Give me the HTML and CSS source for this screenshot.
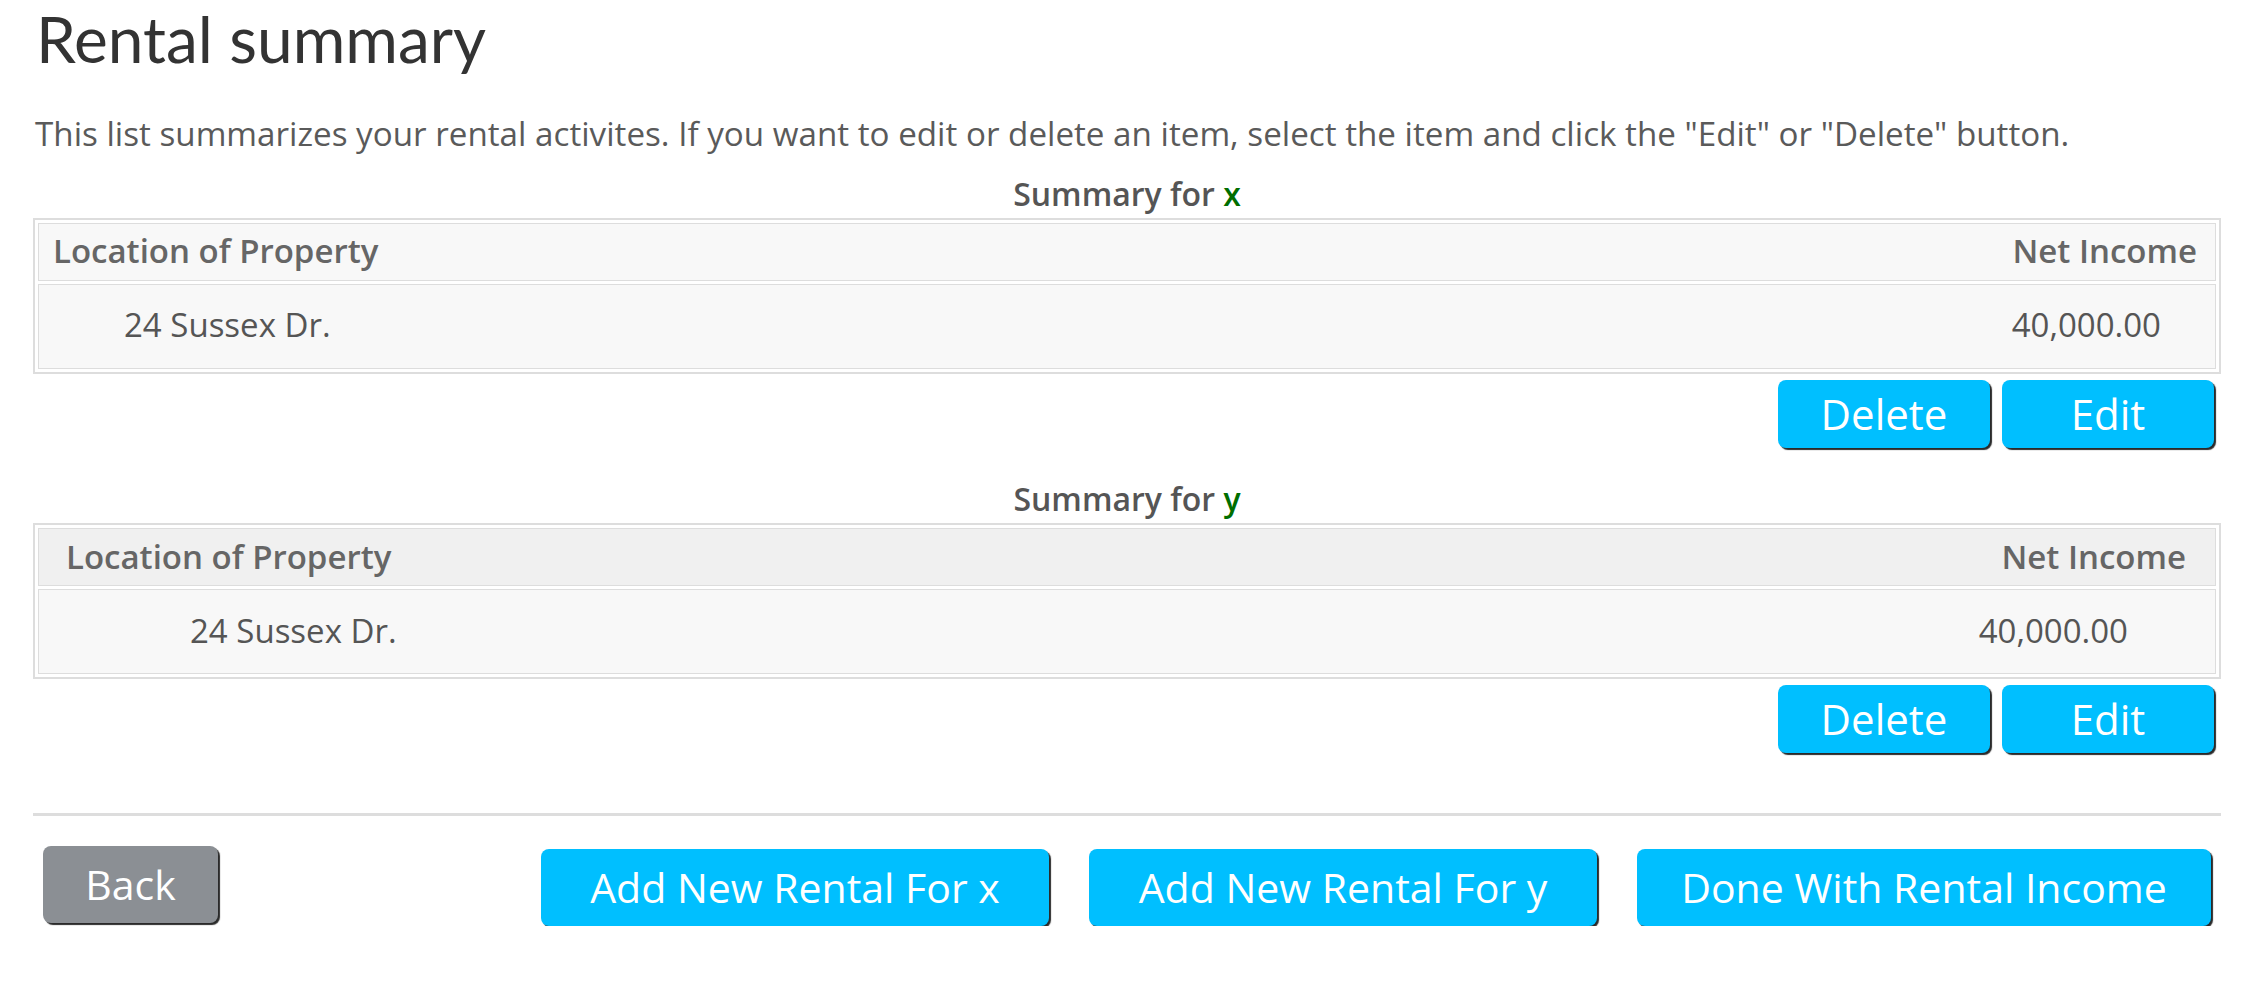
FILE: index.html
```html
<!DOCTYPE html>
<html lang="en">
<head>
<meta charset="utf-8">
<title>Rental summary</title>
<link rel="stylesheet" href="styles.css">
</head>
<body>
<div class="page">
  <h1 class="title">Rental summary</h1>
  <p class="intro">This list summarizes your rental activites. If you want to edit or delete an item, select the item and click the "Edit" or "Delete" button.</p>

  <section class="summary first">
    <div class="summary-title">Summary for <span class="who">x</span></div>
    <table class="rental t1">
      <thead>
        <tr><th class="loc">Location of Property</th><th class="net">Net Income</th></tr>
      </thead>
      <tbody>
        <tr><td class="loc">24 Sussex Dr.</td><td class="net">40,000.00</td></tr>
      </tbody>
    </table>
    <div class="row-actions">
      <button class="btn btn-sm">Delete</button>
      <button class="btn btn-sm">Edit</button>
    </div>
  </section>

  <section class="summary second">
    <div class="summary-title">Summary for <span class="who">y</span></div>
    <table class="rental t2">
      <thead>
        <tr><th class="loc">Location of Property</th><th class="net">Net Income</th></tr>
      </thead>
      <tbody>
        <tr><td class="loc">24 Sussex Dr.</td><td class="net">40,000.00</td></tr>
      </tbody>
    </table>
    <div class="row-actions">
      <button class="btn btn-sm">Delete</button>
      <button class="btn btn-sm">Edit</button>
    </div>
  </section>

  <hr class="divider">

  <div class="footer-actions">
    <button class="btn btn-lg btn-back">Back</button>
    <div class="footer-right">
      <button class="btn btn-lg btn-add">Add New Rental For x</button>
      <button class="btn btn-lg btn-add">Add New Rental For y</button>
      <button class="btn btn-lg btn-done">Done With Rental Income</button>
    </div>
  </div>
</div>
</body>
</html>
```

FILE: styles.css
```css
html, body {
  margin: 0;
  padding: 0;
  background: #ffffff;
}

body {
  font-family: "Open Sans", Lato, "Liberation Sans", sans-serif;
  color: #555555;
}

.page {
  padding: 0 45px 0 33px;
}

.title {
  margin: 0;
  padding: 1px 0 0 3px;
  font-family: Lato, "Open Sans", "Liberation Sans", sans-serif;
  font-size: 64px;
  line-height: 1.2;
  font-weight: 400;
  color: #333333;
}

.intro {
  margin: 36px 0 0 0;
  padding-left: 2px;
  font-size: 33.2px;
  line-height: 1.2;
  color: #5a5a5a;
}

.summary-title {
  text-align: center;
  font-size: 32px;
  line-height: 1.2;
  font-weight: 600;
  color: #555555;
}

.summary.first .summary-title {
  margin-top: 21px;
}

.summary.second .summary-title {
  margin-top: 32px;
}

.who {
  color: #006e00;
}

.rental {
  width: 100%;
  margin-top: 5px;
  border: 2px solid #dddddd;
  border-spacing: 0 3px;
  padding: 0 3px;
  font-size: 33px;
  line-height: 1.2;
}

.rental th,
.rental td {
  border-top: 1px solid #dddddd;
  border-bottom: 1px solid #dddddd;
}

.rental .loc {
  text-align: left;
  border-left: 1px solid #dddddd;
}

.rental .net {
  text-align: right;
  border-right: 1px solid #dddddd;
}

.rental th {
  height: 54px;
  padding-top: 0;
  padding-bottom: 2px;
  font-weight: 600;
  color: #666666;
}

.t1 th {
  background: #f8f8f8;
}

.t2 th {
  background: #f0f0f0;
}

.rental td {
  height: 80px;
  padding-top: 0;
  padding-bottom: 3px;
  background: #f8f8f8;
  color: #555555;
}

.t1 th.loc { padding-left: 14px; }
.t1 th.net { padding-right: 18px; }
.t1 td.loc { padding-left: 85px; }
.t1 td.net { padding-right: 54px; }

.t2 th.loc { padding-left: 27px; }
.t2 th.net { padding-right: 29px; }
.t2 td.loc { padding-left: 151px; }
.t2 td.net { padding-right: 87px; }

.row-actions {
  display: flex;
  justify-content: flex-end;
  gap: 12px;
  margin-top: 6px;
  padding-right: 7px;
}

.btn {
  border: none;
  border-radius: 8px;
  background: #00bfff;
  color: #ffffff;
  font-family: "Open Sans", Lato, "Liberation Sans", sans-serif;
  font-weight: 400;
  line-height: 1.2;
  box-shadow: 2px 2px 1px #2a2a2a;
  padding: 0;
  cursor: pointer;
}

.btn-sm {
  width: 212px;
  height: 68px;
  font-size: 42px;
}

.divider {
  margin: 60px 0 0 0;
  border: none;
  height: 3px;
  background: #dddddd;
}

.footer-actions {
  display: flex;
  align-items: flex-start;
  justify-content: space-between;
  margin-top: 30px;
  padding: 0 10px 0 10px;
}

.footer-right {
  display: flex;
  gap: 40px;
  padding-top: 3px;
}

.btn-lg {
  height: 77px;
  font-size: 41px;
}

.btn-back {
  width: 175px;
  background: #8b8f94;
}

.btn-add {
  width: 508px;
}

.btn-done {
  width: 574px;
}
```
